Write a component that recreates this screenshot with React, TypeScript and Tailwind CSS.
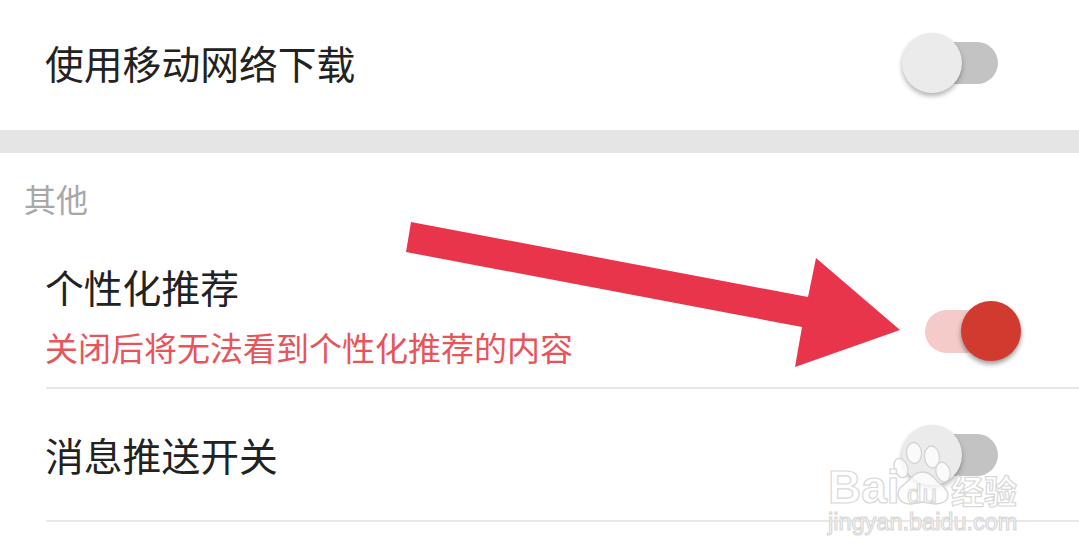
import React from "react";

function Toggle({ on }: { on?: boolean }) {
  if (on) {
    return (
      <div className="flex h-[60px] w-[96px] items-center">
        <div className="z-0 -mr-[26px] h-[43px] w-[62px] rounded-full bg-[#f5cbc9]" />
        <div className="z-10 h-[60px] w-[60px] rounded-full bg-[#d13a2f] shadow-[0_3px_5px_rgba(0,0,0,0.4)]" />
      </div>
    );
  }
  return (
    <div className="flex h-[60px] w-[96px] items-center">
      <div className="z-10 h-[60px] w-[60px] shrink-0 rounded-full bg-[#ebebeb] shadow-[0_3px_5px_rgba(0,0,0,0.3)]" />
      <div className="-ml-[44px] h-[42px] w-[80px] shrink-0 rounded-full bg-[#c3c3c3]" />
    </div>
  );
}

function Watermark() {
  const outline = "[-webkit-text-stroke:1.2px_#d8d8d8] text-white";
  return (
    <div className="pointer-events-none absolute left-[826px] top-[420px] z-20 h-[120px] w-[200px] font-['Liberation_Sans',sans-serif]">
      <svg className="absolute left-0 top-0" width="200" height="120" viewBox="826 420 200 120">
        <g fill="#fff" fillOpacity="0.75" stroke="#d4d4d4" strokeWidth="1.3">
          <ellipse cx="914" cy="453" rx="7.5" ry="10.5" transform="rotate(-5 914 453)" />
          <ellipse cx="932" cy="457" rx="7.5" ry="11" transform="rotate(-5 932 457)" />
          <ellipse cx="901" cy="468" rx="6.5" ry="10" transform="rotate(-20 901 468)" />
          <ellipse cx="943" cy="472" rx="7" ry="10" transform="rotate(-15 943 472)" />
          <path d="M923 472c7 0 11 5 14 9 5 5 11 8 11 14 0 6-6 9-13 9-5 0-8-2-12-2s-7 2-12 2c-8 0-13-4-13-10 0-7 6-9 10-13 5-5 7-9 15-9z" />
        </g>
      </svg>
      <span className={`absolute left-[2px] top-[43px] text-[46px] leading-[48px] font-bold ${outline}`}>Bai</span>
      <span className={`absolute left-[81px] top-[60px] text-[26px] leading-[28px] tracking-[1px] ${outline}`}>du</span>
      <span className={`absolute left-[125px] top-[54px] font-['Noto_Sans_CJK_SC',sans-serif] text-[33px] leading-[32px] font-bold ${outline}`}>经验</span>
      <span className={`absolute left-[2px] top-[89px] text-[23.5px] leading-[26px] ${outline}`}>jingyan.baidu.com</span>
    </div>
  );
}

export default function App() {
  return (
    <div className="relative h-[560px] w-[1079px] overflow-hidden bg-white font-['Noto_Sans_CJK_SC',sans-serif]">
      {/* first row */}
      <div className="flex h-[130px] items-center justify-between pb-[4px] pl-[45px] pr-[81px]">
        <span className="mb-[2px] text-[38.8px] text-[#222222]">使用移动网络下载</span>
        <Toggle />
      </div>

      <div className="h-[23px] bg-[#e5e5e5]" />

      <div className="flex h-[72px] items-center pl-[24px] pt-[18px]">
        <span className="text-[32px] text-[#a8a8a8]">其他</span>
      </div>

      <div className="ml-[46px]">
        <div className="flex h-[164px] items-end justify-between border-b-2 border-[#e8e8e8] pb-[26px] pr-[58px]">
          <div className="-mb-[8px] -ml-[1px] flex flex-col">
            <span className="mb-[2px] text-[38.8px] leading-[54px] text-[#222222]">个性化推荐</span>
            <span className="mt-[10px] text-[33px] leading-[44px] text-[#e8545a]">关闭后将无法看到个性化推荐的内容</span>
          </div>
          <Toggle on />
        </div>
        <div className="flex h-[133px] items-center justify-between border-b-2 border-[#e8e8e8] pr-[81px]">
          <span className="-ml-[1px] text-[38.8px] text-[#222222]">消息推送开关</span>
          <Toggle />
        </div>
      </div>

      {/* annotation arrow */}
      <svg className="absolute left-0 top-0" width="1079" height="560" viewBox="0 0 1079 560">
        <polygon points="411,222 808,297 816,258 900,330 795,367 802,327 406,252" fill="#e9354b" />
      </svg>

      <Watermark />
    </div>
  );
}
